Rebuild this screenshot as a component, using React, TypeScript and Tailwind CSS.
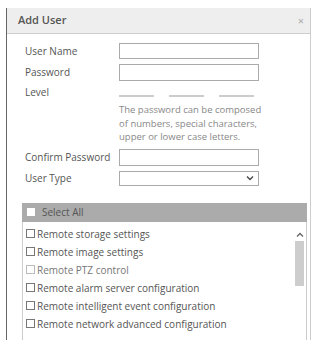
import React from 'react';

const perms = [
  'Remote storage settings',
  'Remote image settings',
  'Remote PTZ control',
  'Remote alarm server configuration',
  'Remote intelligent event configuration',
  'Remote network advanced configuration',
];

const Box: React.FC<{ light?: boolean }> = ({ light }) => (
  <span
    className={`inline-block w-[9px] h-[9px] border bg-white shrink-0 ${light ? 'border-[#bbb]' : 'border-[#777]'}`}
  ></span>
);

const App: React.FC = () => {
  return (
    <div
      className="w-[312px] h-[340px] bg-white pt-[8px] overflow-hidden text-[#555]"
      style={{ fontFamily: '"Open Sans", "Noto Sans", sans-serif' }}
    >
      <div className="ml-[6px] w-[305px] h-[340px] border-l border-l-[#666] border-r border-r-[#ccc] bg-white">
        {/* header */}
        <div className="h-[26px] bg-[#eeeeee] border-b border-[#cfcfcf] flex items-center justify-between pl-[11px] pr-[6px]">
          <span className="text-[11px] font-semibold text-[#555]">Add User</span>
          <span className="text-[11px] text-[#aaa] leading-none">×</span>
        </div>

        <div className="pl-[18px] pr-[3px] pt-[9px]">
          <div className="grid grid-cols-[94px_140px] gap-y-[5px] items-center text-[10px] text-[#555]">
            <span>User Name</span>
            <div className="h-[16px] border border-[#aaa] bg-white"></div>
            <span>Password</span>
            <div className="h-[17px] border border-[#aaa] bg-white"></div>
            <span className="self-start -mt-[1px]">Level</span>
            <div className="flex justify-between pt-[5px] pr-[5px]">
              <span className="w-[35px] h-[2px] bg-[#ccc]"></span>
              <span className="w-[35px] h-[2px] bg-[#ccc]"></span>
              <span className="w-[35px] h-[2px] bg-[#ccc]"></span>
            </div>
          </div>

          <div className="ml-[94px] mt-[3px] text-[9.5px] leading-[13.5px] text-[#888]">
            <p>The password can be composed</p>
            <p>of numbers, special characters,</p>
            <p>upper or lower case letters.</p>
          </div>

          <div className="grid grid-cols-[94px_140px] gap-y-[5px] items-center text-[10px] text-[#555] mt-[5px]">
            <span>Confirm Password</span>
            <div className="h-[17px] border border-[#aaa] bg-white"></div>
            <span>User Type</span>
            <div className="h-[15px] border border-[#aaa] bg-white flex items-center justify-end pr-[4px]">
              <svg width="8" height="6" viewBox="0 0 8 6">
                <path d="M1 1.5 L4 4.5 L7 1.5" fill="none" stroke="#444" strokeWidth="1.3" />
              </svg>
            </div>
          </div>
        </div>

        {/* permissions */}
        <div className="ml-[15px] mr-[3px] mt-[17px]">
          <div className="h-[19px] bg-[#ababab] flex items-center pl-[5px] gap-[7px]">
            <span className="inline-block w-[8px] h-[8px] bg-white"></span>
            <span className="text-[10px] text-[#555]">Select All</span>
          </div>
          <div className="border border-[#ccc] border-t-0 h-[130px] flex">
            <div className="flex-1 pl-[3px] pt-[6px] flex flex-col gap-[5.5px] text-[10px] leading-[12.5px] text-[#555]">
              {perms.map((p, i) => (
                <div key={p} className="flex items-center gap-[2px]">
                  <Box light={i === 2} />
                  <span className={i === 2 ? 'text-[#777]' : ''}>{p}</span>
                </div>
              ))}
            </div>
            <div className="w-[11px] mr-[1px] flex flex-col items-center pt-[10px]">
              <svg width="8" height="6" viewBox="0 0 8 6">
                <path d="M1 4.5 L4 1.5 L7 4.5" fill="none" stroke="#666" strokeWidth="1.3" />
              </svg>
              <div className="w-[9px] h-[45px] bg-[#cdcdcd] mt-[3px]"></div>
            </div>
          </div>
        </div>
      </div>
    </div>
  );
};

export default App;
